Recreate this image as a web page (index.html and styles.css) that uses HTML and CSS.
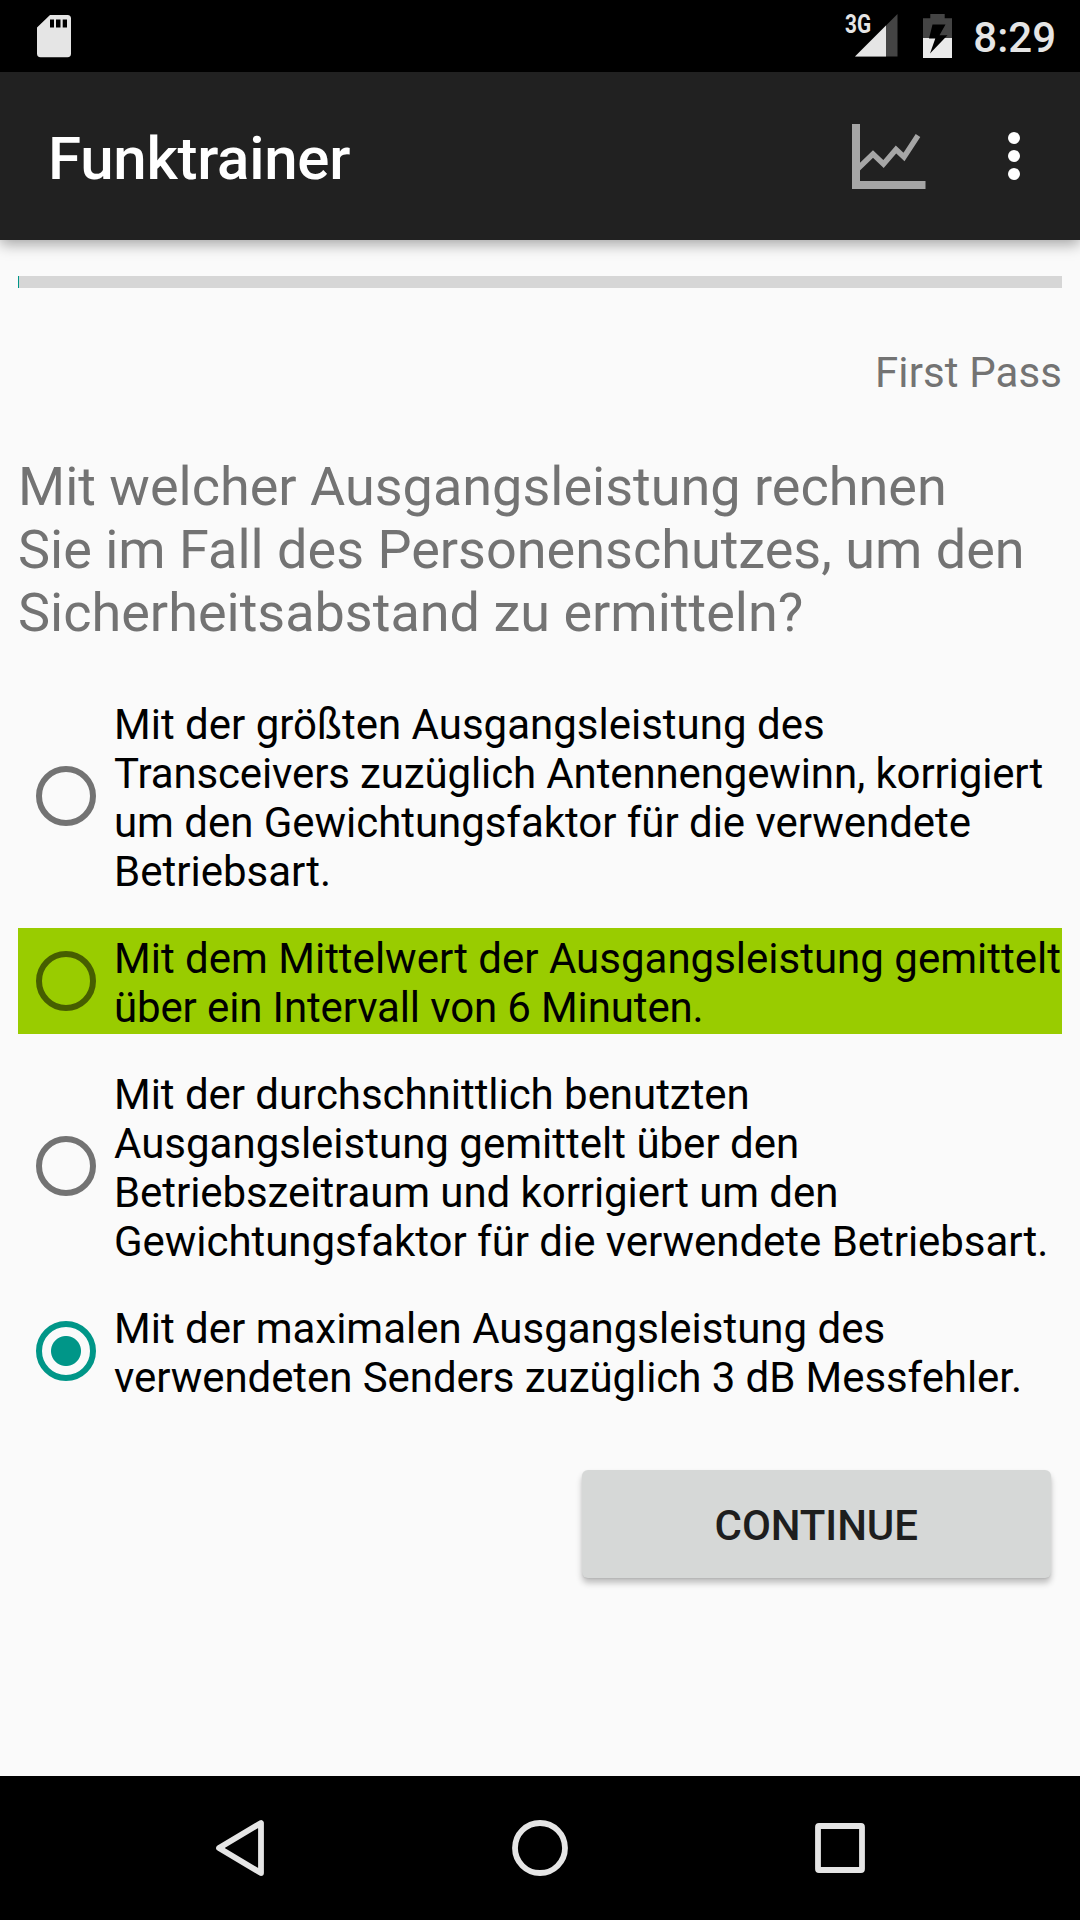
FILE: index.html
```html
<!DOCTYPE html>
<html lang="de">
<head>
<meta charset="utf-8">
<title>Funktrainer</title>
<link rel="stylesheet" href="styles.css">
</head>
<body>
<div class="screen">
  <header class="status-bar">
    <svg class="sd-icon" width="34" height="43" viewBox="0 0 34 43"><path fill="#e5e5e5" fill-rule="evenodd" d="M13 0H30.500Q34 0 34 3.500V38.500Q34 42.300 30.500 42.300H3.500Q0 42.300 0 38.500V12.500ZM13 4.500V12.500H17V4.500ZM19 4.500V12.500H23.500V4.500ZM25.700 4.500V12.500H30V4.500Z"/></svg>
    <div class="status-right">
      <span class="network">3G</span>
      <svg class="signal" width="43" height="43" viewBox="0 0 43 43"><path fill="#444" d="M42.500 0V42.500H0Z"/><path fill="#e5e5e5" d="M31 11.500V42.500H0Z"/></svg>
      <svg class="battery" width="29" height="44" viewBox="0 0 29 44"><path fill="#444" d="M7.300 0H21.700V4.200H29V24H0V4.200H7.300Z"/><path fill="#eaeaea" d="M0 24H29V44H0Z"/><path fill="#000" d="M9.500 10.500H22.500L16.500 21.300H24.500L7 39.500L12.300 24.500H6Z"/></svg>
      <span class="clock">8:29</span>
    </div>
  </header>
  <div class="app-bar">
    <h1 class="app-title">Funktrainer</h1>
    <svg class="chart-icon" width="74" height="66" viewBox="0 0 74 66"><path fill="#a6a6a6" d="M0 0H8V57H73.500V65H0Z"/><path fill="none" stroke="#a6a6a6" stroke-width="5.500" d="M6 44.500L21 30L31.500 40L44 25.500L52 33L66 11.500"/></svg>
    <svg class="menu-icon" width="12" height="48" viewBox="0 0 12 48" fill="#fff"><circle cx="6" cy="6" r="6"/><circle cx="6" cy="24" r="6"/><circle cx="6" cy="42" r="6"/></svg>
  </div>
  <main class="content">
    <div class="progress"><div class="progress-fill"></div></div>
    <p class="pass">First Pass</p>
    <p class="question">Mit welcher Ausgangsleistung rechnen<br>Sie im Fall des Personenschutzes, um den<br>Sicherheitsabstand zu ermitteln?</p>
    <div class="options">
      <div class="option"><span class="radio"></span><span>Mit der größten Ausgangsleistung des<br><span class="tighter">Transceivers zuzüglich Antennengewinn, korrigiert</span><br><span class="snug">um den Gewichtungsfaktor für die verwendete</span><br>Betriebsart.</span></div>
      <div class="option correct"><span class="radio"></span><span>Mit dem Mittelwert der Ausgangsleistung gemittelt<br><span class="tighter">über ein Intervall von 6 Minuten.</span></span></div>
      <div class="option"><span class="radio"></span><span><span class="snug">Mit der durchschnittlich benutzten</span><br>Ausgangsleistung gemittelt über den<br><span class="tight">Betriebszeitraum und korrigiert um den</span><br><span class="snug">Gewichtungsfaktor für die verwendete Betriebsart.</span></span></div>
      <div class="option"><span class="radio checked"></span><span>Mit der maximalen Ausgangsleistung des<br><span class="tight">verwendeten Senders zuzüglich 3 dB Messfehler.</span></span></div>
    </div>
    <button class="continue">CONTINUE</button>
  </main>
  <nav class="nav-bar">
    <svg width="60" height="60" viewBox="0 0 60 60"><path d="M51 5V55L9 30Z"/></svg>
    <svg width="60" height="60" viewBox="0 0 60 60"><circle cx="30" cy="30" r="25"/></svg>
    <svg width="60" height="60" viewBox="0 0 60 60"><rect x="8" y="8" width="44" height="44" rx="1"/></svg>
  </nav>
</div>
</body>
</html>
```
FILE: styles.css
```css
* { box-sizing: border-box; }
body { margin: 0; background: #fafafa; font-family: Roboto, sans-serif; }
h1, p { margin: 0; }
svg { display: block; flex: none; }
.screen { width: 1080px; height: 1920px; display: flex; flex-direction: column; overflow: hidden; }

.status-bar { height: 72px; flex: none; background: #000; color: #e5e5e5; display: flex; justify-content: space-between; align-items: flex-start; padding: 0 24px 0 37px; }
.sd-icon { margin-top: 15px; }
.status-right { display: flex; align-items: flex-start; }
.network { width: 10px; margin-top: 10px; font-size: 25px; line-height: 30px; font-weight: 700; transform: scaleX(.83); transform-origin: left; }
.signal { margin-top: 14px; }
.battery { margin: 14px 21px 0 25px; }
.clock { margin-top: 13px; font-size: 42px; line-height: 49px; font-weight: 500; }

.app-bar { height: 168px; flex: none; background: #212121; color: #fff; display: flex; align-items: flex-start; padding: 0 60px 0 48px; box-shadow: 0 4px 14px rgba(0, 0, 0, .36); }
.app-title { flex: 1; margin-top: 52px; font-size: 60px; line-height: 70px; font-weight: 500; letter-spacing: -.25px; }
.chart-icon { margin-top: 52px; }
.menu-icon { margin: 60px 0 0 82px; }

.content { flex: 1; padding: 36px 18px 0; display: flex; flex-direction: column; }
.progress { height: 12px; background: #d6d6d6; }
.progress-fill { width: 1px; height: 12px; background: #009688; }
.pass { margin-top: 60px; font-size: 42px; line-height: 49px; text-align: right; color: #737373; letter-spacing: .1px; }
.question { margin-top: 58px; font-size: 54px; line-height: 63px; color: #737373; white-space: nowrap; }
.options { margin-top: 50px; display: flex; flex-direction: column; gap: 30px; }
.option { display: flex; padding: 6px 0 2px 18px; font-size: 42px; line-height: 49px; color: #000; white-space: nowrap; gap: 18px; }
.snug { letter-spacing: -.04px; }
.tight { letter-spacing: -.07px; }
.tighter { letter-spacing: -.13px; }
.correct { background: #9c0; }
.radio { align-self: center; flex: none; width: 60px; height: 60px; margin-top: -4px; border: 6px solid rgba(0, 0, 0, .54); border-radius: 50%; }
.checked { border-color: #009688; background: radial-gradient(circle, #009688 14.500px, transparent 15.500px); }
.continue { align-self: flex-end; width: 468.500px; height: 108px; margin: 66px 11.500px 0 0; padding: 2px 0 0; border: 0; border-radius: 6px; background: #d6d8d7; color: #1e1e1e; font: 500 42px/49px Roboto, sans-serif; letter-spacing: -.1px; box-shadow: 0 5px 6px rgba(0, 0, 0, .24), 0 1px 2px rgba(0, 0, 0, .08); }

.nav-bar { height: 144px; flex: none; background: #000; display: flex; justify-content: center; align-items: center; gap: 240px; }
.nav-bar svg { fill: none; stroke: #e5e5e5; stroke-width: 5.800; stroke-linejoin: round; }
```
